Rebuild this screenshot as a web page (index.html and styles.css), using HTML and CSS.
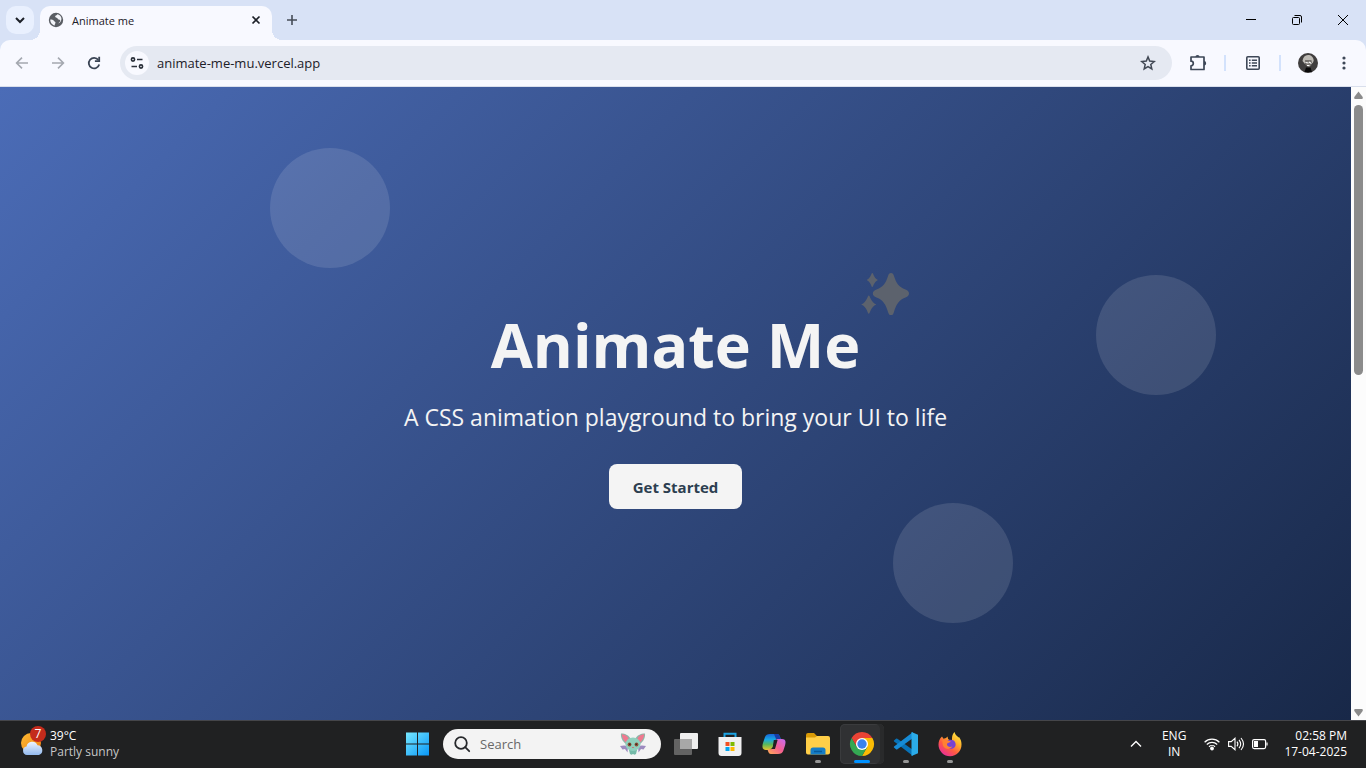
FILE: index.html
```html
<!DOCTYPE html>
<html lang="en">
<head>
<meta charset="utf-8">
<meta name="viewport" content="width=device-width, initial-scale=1">
<title>Animate me</title>
<link rel="stylesheet" href="styles.css">
</head>
<body class="screen">
<header class="browser">
  <div class="tabstrip">
    <button class="tab-search" aria-label="Search tabs"><svg width="28" height="28" viewBox="0 0 28 28" fill="none" stroke="#1c2028" stroke-width="2"><path d="M10 12l4 4 4-4"/></svg></button>
    <div class="tab">
      <svg width="16" height="16" viewBox="0 0 16 16"><circle cx="8" cy="8" r="7.2" fill="#5a5e64"/><path d="M2.3 7.6c1.600.1 2.700.2 3.500 1.200.6.9 1.700.8 1.700 1.900 0 1-.8 1-.8 2.800C4.200 13 2 10.600 2.300 7.600zM9.200 2.300c-.2 1.200-1.300.9-1.900 1.700-.5.8.3 1.600 1.300 1.700 1 .2.900 1.500 2.100 1.700 1.200.1 1.900.7 1.400 1.900-.3.9-1.300.9-1.600 2.300 4.300-2.400 4-8.400-1.300-9.300z" fill="#f3f5fa"/></svg>
      <span class="tab-title">Animate me</span>
      <button class="icon-button tab-close" aria-label="Close tab"><svg width="16" height="16" viewBox="0 0 16 16" stroke="#1c2028" stroke-width="1.700"><path d="M4.500 4.500l7 7M11.500 4.500l-7 7"/></svg></button>
    </div>
    <button class="icon-button new-tab" aria-label="New tab"><svg width="16" height="16" viewBox="0 0 16 16" stroke="#454c57" stroke-width="1.600"><path d="M8 3v10M3 8h10"/></svg></button>
    <div class="window-controls">
      <button class="window-button" aria-label="Minimize"><svg width="12" height="12" viewBox="0 0 12 12" stroke="#000"><path d="M1 5.500h10"/></svg></button>
      <button class="window-button" aria-label="Restore"><svg width="12" height="12" viewBox="0 0 12 12" fill="none" stroke="#000"><rect x="1.500" y="3.500" width="7" height="7" rx="1"/><path d="M3.500 1.500H9a1.500 1.500 0 0 1 1.500 1.500v5.500"/></svg></button>
      <button class="window-button" aria-label="Close"><svg width="12" height="12" viewBox="0 0 12 12" stroke="#000"><path d="M1 1l10 10M11 1L1 11"/></svg></button>
    </div>
  </div>
  <div class="toolbar">
    <div class="nav">
      <button class="icon-button" aria-label="Back"><svg width="16" height="16" viewBox="0 0 16 16" fill="none" stroke="#a4a8b0" stroke-width="1.600"><path d="M14 8H3M8 2.600L2.600 8 8 13.400"/></svg></button>
      <button class="icon-button" aria-label="Forward"><svg width="16" height="16" viewBox="0 0 16 16" fill="none" stroke="#a4a8b0" stroke-width="1.600"><path d="M2 8h11M8 2.600L13.400 8 8 13.400"/></svg></button>
      <button class="icon-button" aria-label="Reload"><svg width="16" height="16" viewBox="0 0 16 16" fill="none" stroke="#3a4454" stroke-width="1.800"><path d="M13.200 9.600A5.300 5.300 0 1 1 12.300 4.900"/><path d="M13.200 1.800v4.300H8.900"/></svg></button>
    </div>
    <div class="omnibox">
      <button class="site-info" aria-label="View site information"><svg width="16" height="16" viewBox="0 0 16 16" fill="none" stroke="#2a303a" stroke-width="1.600"><circle cx="4" cy="4.500" r="1.600"/><path d="M8 4.500h5.500M2.500 11.500H8"/><circle cx="12" cy="11.500" r="1.600"/></svg></button>
      <input class="address" type="text" aria-label="Address" value="animate-me-mu.vercel.app">
      <button class="icon-button" aria-label="Bookmark this tab"><svg width="16" height="16" viewBox="0 0 16 16" fill="none" stroke="#414854" stroke-width="1.500"><path d="M8 1.900l1.700 4.200 4.500.4-3.400 3 1 4.400L8 11.600l-3.800 2.300 1-4.400-3.400-3 4.500-.4z"/></svg></button>
    </div>
    <div class="actions">
      <button class="icon-button" aria-label="Extensions"><svg width="18" height="18" viewBox="0 0 18 18"><path d="M2 3h13v12.500H2v-3.700a2.300 2.300 0 0 0 0-4.600z" fill="none" stroke="#3d4757" stroke-width="1.700" stroke-linejoin="round"/><path d="M6.400 3a2.100 2.100 0 0 1 4.200 0zM15 7a2.200 2.200 0 0 1 0 4.400z" fill="#3d4757"/></svg></button>
      <span class="divider"></span>
      <button class="icon-button" aria-label="Reading list"><svg width="16" height="16" viewBox="0 0 16 16" fill="none" stroke="#3d4757" stroke-width="1.600"><rect x="1.800" y="1.800" width="12.400" height="12.400" rx="1"/><path d="M4 5.200h1.600M4 8h1.600M4 10.800h1.600M6.800 5.200H12M6.800 8H12M6.800 10.800H12" stroke-width="1.500"/></svg></button>
      <span class="divider"></span>
      <div class="profile">
        <button class="icon-button" aria-label="Profile"><svg width="20" height="20" viewBox="0 0 20 20"><circle cx="10" cy="10" r="10" fill="#403e3e"/><path d="M4.500 8C5 4 7 2 10 2s5.500 2 5.700 5.500l-1 3L13 8H8l-1 3z" fill="#bdbab4"/><path d="M7 7h6.500v5L11 14.500 7.500 12z" fill="#77736f"/><path d="M7.500 9.500l3 .5M11 9l2.500 1.500M9 12.500h2.500" stroke="#fff" stroke-width="1.200"/><path d="M6.500 19.300L8 14.500h4.500l1.500 4.700z" fill="#090909"/></svg></button>
        <button class="icon-button" aria-label="Menu"><svg width="16" height="16" viewBox="0 0 16 16" fill="#3d4757"><circle cx="8" cy="3" r="1.600"/><circle cx="8" cy="8" r="1.600"/><circle cx="8" cy="13" r="1.600"/></svg></button>
      </div>
    </div>
  </div>
</header>

<div class="viewport">
  <main class="hero">
    <span class="bubble bubble-one"></span>
    <span class="bubble bubble-two"></span>
    <span class="bubble bubble-three"></span>
    <h1 class="hero-title">Animate Me
      <svg class="sparkles" width="48" height="44" viewBox="0 0 48 44" fill="#5c626d"><path d="M30 1c1.700 0 2.300 1 2.800 2.500 2.600 8 4.800 11 11.700 14.100 2.400 1 3.500 2 3.500 4s-1.100 2.800-3.500 4C37.600 28.200 35.400 32.500 32.800 40.500c-.5 1.600-1.100 2.600-2.800 2.600s-2.300-1-2.800-2.600c-2.600-8-4.800-12.300-11.700-14.900-2.400-1-3.700-2.100-3.700-4s1.300-3.100 3.700-4C22.400 14.500 24.600 11.500 27.200 3.500 27.700 2 28.300 1 30 1z"/><path d="M11.300 1c1.200 0 1.200 4.800 5.600 7-4.400 2.200-4.400 7-5.600 7s-1.200-4.800-5.600-7c4.400-2.200 4.400-7 5.600-7zM7.800 23.500c1.300 0 1.600 6.500 7.600 9-6 2.500-6.300 9.300-7.600 9.300S6.200 35 .2 32.500c6-2.500 6.300-9 7.600-9z"/></svg>
    </h1>
    <p class="hero-text">A CSS animation playground to bring your UI to life</p>
    <button class="cta">Get Started</button>
  </main>
  <div class="scrollbar" aria-hidden="true">
    <svg width="15" height="16" viewBox="0 0 15 16"><path d="M7.500 4.500l4.200 5.500q.8 2-1 2H4.300q-1.800 0-1-2z" fill="#8b8b8b"/></svg>
    <div class="track"><div class="thumb"></div></div>
    <svg width="15" height="16" viewBox="0 0 15 16"><path d="M7.500 12.500l4.200-5.500q.8-2-1-2H4.300q-1.800 0-1 2z" fill="#8b8b8b"/></svg>
  </div>
</div>

<footer class="taskbar">
  <button class="weather">
    <svg width="28" height="30" viewBox="0 0 28 30"><defs><linearGradient id="sun" x1="0" y1="0" x2="1" y2="1"><stop stop-color="#ffbd33"/><stop offset="1" stop-color="#ec7d13"/></linearGradient><linearGradient id="cloud" x2="0" y2="1"><stop stop-color="#edf4ff"/><stop offset="1" stop-color="#92b9ee"/></linearGradient></defs><circle cx="11" cy="14" r="10" fill="url(#sun)"/><path d="M7 26a4.300 4.300 0 0 1-.5-8.500 5.800 5.800 0 0 1 11-1.200 5 5 0 0 1 1.500 9.700z" fill="url(#cloud)"/><circle cx="18" cy="5" r="8" fill="#c42b1c"/><text x="18" y="9" text-anchor="middle" class="badge">7</text></svg>
    <span class="weather-text"><span>39°C</span><span class="muted">Partly sunny</span></span>
  </button>
  <nav class="dock" aria-label="Applications">
    <button class="app" aria-label="Start"><svg width="24" height="24" viewBox="0 0 24 24"><defs><linearGradient id="win" gradientUnits="userSpaceOnUse" x1="0" y1="0" x2="24" y2="24"><stop stop-color="#78e9ff"/><stop offset="1" stop-color="#0594f7"/></linearGradient></defs><path d="M0 .5h11v11H0zM12 .5h11v11H12zM0 12.500h11v11H0zM12 12.500h11v11H12z" fill="url(#win)"/></svg></button>
    <label class="search">
      <svg width="18" height="18" viewBox="0 0 18 18" fill="none" stroke="#26282b" stroke-width="1.800"><circle cx="8" cy="8" r="5.800"/><path d="M12.200 12.200l4 4" stroke-linecap="round"/></svg>
      <input class="search-input" type="text" placeholder="Search" aria-label="Search">
      <svg width="26" height="22" viewBox="0 0 26 22"><path d="M8 13q-4-1-8 0l2.500 3.500L5 16l2.500 3.500zM18 13q4-1 8 0l-2.500 3.500L21 16l-2.500 3.500z" fill="#9c8abf"/><path d="M1 .5c4.500 0 8 2 9.500 5L6 11C2.500 8.500.5 4.500 1 .5zM25 .5c-4.500 0-8 2-9.500 5L20 11c3.500-2.500 5.500-6.500 5-10.500z" fill="#8fb5a8"/><path d="M1.800 1.300C5.500 1.800 8 3.500 8.700 6L6 9.500C3.500 7.500 2 4.500 1.800 1.300zM24.200 1.300c-3.700.5-6.200 2.200-6.900 4.700L20 9.500c2.500-2 4-5 4.200-8.200z" fill="#f0788f"/><path d="M9 17h8l-1 4-1.500.7L13 21l-1.500.7L10 21z" fill="#74baa8"/><ellipse cx="13" cy="11.300" rx="7.500" ry="6.800" fill="#8fd0bd"/><circle cx="9.500" cy="11.500" r="1.900" fill="#8c5138"/><circle cx="16.500" cy="11.500" r="1.900" fill="#8c5138"/><circle cx="9.800" cy="11.200" r=".7" fill="#25191b"/><circle cx="16.200" cy="11.200" r=".7" fill="#25191b"/><path d="M11.800 14h2.400q-1.200 2-2.400 0z" fill="#d0606c"/></svg>
    </label>
    <div class="apps">
      <button class="app" aria-label="Task view"><svg width="24" height="24" viewBox="0 0 24 24"><rect x="6" y="1" width="18" height="16" rx="1" fill="#efefef"/><rect y="7" width="18" height="16" rx="1" fill="#636363"/><path d="M6 7h12v10H6z" fill="#a8a8a8"/></svg></button>
      <button class="app" aria-label="Store"><svg width="24" height="24" viewBox="0 0 24 24"><path d="M6.500 6V1.700h11V6" fill="none" stroke="#1ba3e3" stroke-width="2"/><path d="M.5 5h23v16a3 3 0 0 1-3 3h-17a3 3 0 0 1-3-3z" fill="#f0f0f1"/><path d="M7.500 10h4v4h-4z" fill="#f25022"/><path d="M12.500 10h4v4h-4z" fill="#7fba00"/><path d="M7.500 15h4v4h-4z" fill="#00a4ef"/><path d="M12.500 15h4v4h-4z" fill="#ffb900"/></svg></button>
      <button class="app" aria-label="Copilot"><svg width="24" height="24" viewBox="0 0 24 24"><defs><linearGradient id="cop-a" x2="0" y2="1"><stop stop-color="#1866d9"/><stop offset=".35" stop-color="#18a9e4"/><stop offset=".65" stop-color="#59b85a"/><stop offset="1" stop-color="#e8c52c"/></linearGradient><linearGradient id="cop-b" x1="1" y1="0" x2="0" y2="1"><stop stop-color="#c56cf5"/><stop offset=".5" stop-color="#f55f91"/><stop offset="1" stop-color="#ffb052"/></linearGradient></defs><path d="M8 2h7c2 0 2.500 1.500 3 3l.7 2H16c-2 0-3 1-3.700 3l-1.500 5c-.5 2-1.500 3-3.800 3H4c-4 0-4-4-3-7l2-6c.8-2 2.300-3 5-3z" fill="url(#cop-a)"/><path d="M12 2h3c2 0 2.500 1.500 3 3l.7 2H14z" fill="#183da8"/><path d="M16 22H9c-2 0-2.500-1.500-3-3l-.5-1.500H8c2 0 3-1 3.700-3l1.500-5C13.800 7.500 15 7 17 7h3c4 0 4 3 3 6.500L21.200 19c-.8 2-2.300 3-5.200 3z" fill="url(#cop-b)"/><path d="M11.800 8h3.800L13 17H8.500q1.800-.5 2.300-2z" fill="#202122"/></svg></button>
      <button class="app running" aria-label="File Explorer"><svg width="24" height="24" viewBox="0 0 24 24"><path d="M0 3q0-2 2-2h6l3 3h11v5H0z" fill="#d99a06"/><path d="M0 5.500h9L11 4h11q2 0 2 2v14.500q0 2-2 2H2q-2 0-2-2z" fill="#ffcf48"/><path d="M4.500 22.500V18q0-2.500 2.500-2.500h10q2.500 0 2.500 2.500v4.500z" fill="#167dc5"/><path d="M8 19.500h8" stroke="#075a9b" stroke-width="1.500"/></svg></button>
      <button class="app active" aria-label="Chrome"><svg width="24" height="24" viewBox="0 0 24 24"><path d="M1.600 6A12 12 0 0 1 22.400 6H12L6.800 15z" fill="#ea4335"/><path d="M22.400 6A12 12 0 0 1 12 24l5.200-9L12 6z" fill="#fbbc05"/><path d="M1.600 6A12 12 0 0 0 12 24l5.200-9H6.800z" fill="#34a853"/><circle cx="12" cy="12" r="6" fill="#fff"/><circle cx="12" cy="12" r="4.700" fill="#3b82ee"/></svg></button>
      <button class="app running" aria-label="Visual Studio Code"><svg width="24" height="24" viewBox="0 0 24 24"><path d="M0 8.400l2-1.700q.7-.5 1.400 0L19 18v6L.1 9.600q-.6-.6-.1-1.200z" fill="#0872b7"/><path d="M0 15.600l2 1.700q.7.500 1.400 0L19 6V0L.1 14.400q-.6.600-.1 1.200z" fill="#168bd5"/><path d="M17.500 0L24 2.700v18.600L17.500 24z" fill="#2bace9"/></svg></button>
      <button class="app running" aria-label="Firefox"><svg width="24" height="24" viewBox="0 0 24 24"><defs><linearGradient id="fox" x1=".9" y1="0" x2=".2" y2="1"><stop stop-color="#fff04c"/><stop offset=".35" stop-color="#ffb12a"/><stop offset=".65" stop-color="#ff5a42"/><stop offset="1" stop-color="#e629a3"/></linearGradient></defs><path d="M4 4.500l1.500 2.300L8 6l1.500-1.500q0 2.500 2 3.500l2.500 1c0-4 0-6.500 2.500-9 .5 2.500 2.500 4 4 5.500l.5-.5c2 2.500 2.500 5 2.500 7.500A11.500 11.500 0 0 1 .5 12.800C.5 10 1.500 6.500 4 4.500z" fill="url(#fox)"/><path d="M8.500 9.500c2-2.500 7-2.500 8.500.5 2 4-1 7-4.500 7S6.500 13 8.500 9.500z" fill="#7743d2"/><path d="M4.500 8c2-1 4-.5 5.500.7l2.800.6c-.5 1.500-3.800 1.200-3.800 3.200 0 2.300 3.500 3 5.500 1.800-1.500 3.200-7 3.700-9 .2C4.300 12.500 4.500 10 4.500 8z" fill="#ff8133"/></svg></button>
    </div>
  </nav>
  <div class="tray">
    <button class="tray-button" aria-label="Show hidden icons"><svg width="14" height="14" viewBox="0 0 14 14" fill="none" stroke="#fff" stroke-width="1.400"><path d="M2 9.500l5-5 5 5"/></svg></button>
    <button class="tray-button language">ENG<br>IN</button>
    <button class="tray-button status" aria-label="Network, volume and battery">
      <svg width="16" height="16" viewBox="0 0 16 16" fill="none" stroke="#fff" stroke-width="1.200"><path d="M.6 6.200a10.500 10.500 0 0 1 14.800 0M2.800 8.500a7.400 7.400 0 0 1 10.400 0M5 10.700a4.300 4.300 0 0 1 6 0"/><circle cx="8" cy="12.500" r="1.300" fill="#fff"/></svg>
      <svg width="16" height="16" viewBox="0 0 16 16" fill="none" stroke="#fff" stroke-width="1.100"><path d="M.6 5.600h2.600L7 2.300v11.400l-3.800-3.300H.6zM9 5.700q1.800 2.300 0 4.600M11 3.800q3.400 4.200 0 8.400M13 2q5 6 0 12"/></svg>
      <svg width="16" height="16" viewBox="0 0 16 16" fill="none" stroke="#fff" stroke-width="1.200"><rect x=".6" y="3.600" width="13" height="9" rx="1.500"/><path d="M2 5h4v6H2z" fill="#fff" stroke="none"/><path d="M15 6.500v3"/></svg>
    </button>
    <button class="tray-button clock">02:58 PM<br>17-04-2025</button>
  </div>
</footer>
</body>
</html>
```

FILE: styles.css
```css
* {
  box-sizing: border-box;
}

body {
  margin: 0;
}

button,
input {
  border: 0;
  padding: 0;
  margin: 0;
  background: transparent;
  color: inherit;
  font: inherit;
}

svg {
  display: block;
  flex: none;
  overflow: visible;
}

.screen {
  display: flex;
  flex-direction: column;
  height: 100vh;
  overflow: hidden;
  font-family: "Open Sans", "Noto Sans", sans-serif;
  font-size: 12px;
  color: #1c2028;
}

.browser {
  background: #d8e2f6;
}

.tabstrip {
  display: flex;
  align-items: center;
  height: 40px;
  padding-left: 6px;
}

.tab-search {
  border-radius: 10px;
  background: #e9f0fe;
}

.tab {
  position: relative;
  display: flex;
  align-self: flex-end;
  align-items: center;
  gap: 8px;
  width: 232px;
  height: 34px;
  margin-left: 6px;
  padding: 0 2px 6px 8px;
  border-radius: 10px 10px 0 0;
  background: #f8f9ff;
}

.tab::before,
.tab::after {
  content: "";
  position: absolute;
  bottom: 0;
  width: 10px;
  height: 10px;
}

.tab::before {
  right: 100%;
  background: radial-gradient(circle at 0 0, transparent 10px, #f8f9ff 10px);
}

.tab::after {
  left: 100%;
  background: radial-gradient(circle at 100% 0, transparent 10px, #f8f9ff 10px);
}

.tab-title {
  flex: 1;
  font-size: 11px;
}

.icon-button {
  display: flex;
  align-items: center;
  justify-content: center;
  width: 28px;
  height: 28px;
}

.new-tab {
  margin-left: 6px;
}

.window-controls {
  display: flex;
  margin-left: auto;
}

.window-button {
  display: flex;
  align-items: center;
  justify-content: center;
  width: 46px;
  height: 40px;
}

.toolbar {
  display: flex;
  align-items: center;
  gap: 12px;
  height: 47px;
  padding: 0 8px;
  border-bottom: 1px solid #d9dfec;
  border-radius: 10px 10px 0 0;
  background: #f8f9ff;
}

.nav,
.profile {
  display: flex;
  gap: 8px;
}

.omnibox {
  display: flex;
  flex: 1;
  align-items: center;
  height: 34px;
  padding: 0 10px 0 5px;
  border-radius: 17px;
  background: #e5e9f2;
}

.site-info {
  display: flex;
  align-items: center;
  justify-content: center;
  width: 24px;
  height: 24px;
  border-radius: 50%;
  background: #f8f9ff;
}

.address {
  flex: 1;
  margin-left: 8px;
  font-size: 13px;
}

.actions {
  display: flex;
  align-items: center;
  gap: 12px;
}

.divider {
  width: 2px;
  height: 16px;
  margin-right: 1px;
  background: #d3e2fc;
}

.viewport {
  display: flex;
  flex: 1;
  min-height: 0;
}

.hero {
  position: relative;
  display: flex;
  flex: 1;
  flex-direction: column;
  align-items: center;
  justify-content: center;
  padding-top: 7px;
  background: linear-gradient(135deg, #4b6cb7, #182848);
  color: #f4f4f4;
}

.bubble {
  position: absolute;
  width: 120px;
  height: 120px;
  border-radius: 50%;
  background: rgba(244, 244, 244, 0.12);
}

.bubble-one {
  top: 61px;
  left: 20%;
}

.bubble-two {
  top: 188px;
  right: 10%;
}

.bubble-three {
  right: 25%;
  bottom: 97px;
}

.hero-title {
  position: relative;
  margin: 0;
  font-size: 61px;
  font-weight: 700;
  line-height: 80px;
}

.sparkles {
  position: absolute;
  top: -33px;
  left: 100%;
  margin-left: 1px;
}

.hero-text {
  margin: 16px 0 31px;
  font-size: 23px;
  line-height: 32px;
}

.cta {
  height: 45px;
  padding: 0 24px;
  border-radius: 8px;
  background: #f4f4f4;
  color: #2c3e50;
  font-size: 15px;
  font-weight: 700;
}

.scrollbar {
  display: flex;
  flex-direction: column;
  width: 15px;
  background: #fcfcfc;
}

.track {
  flex: 1;
  padding: 2px 2px 0 3px;
}

.thumb {
  width: 9px;
  height: 45%;
  border-radius: 5px;
  background: #8b8b8b;
}

.taskbar {
  display: grid;
  grid-template-columns: 1fr auto 1fr;
  align-items: center;
  height: 48px;
  padding-bottom: 1px;
  border-top: 1px solid #45464a;
  background: #202122;
  color: #fff;
}

.weather {
  display: flex;
  align-items: center;
  gap: 2px;
  padding-left: 20px;
  text-align: left;
}

.weather-text {
  display: flex;
  flex-direction: column;
  line-height: 16px;
}

.badge {
  fill: #fff;
  font-size: 12px;
}

.muted {
  color: #c7c7c7;
}

.dock,
.apps {
  display: flex;
  align-items: center;
}

.dock {
  gap: 3px;
  padding-left: 2px;
}

.app {
  position: relative;
  display: flex;
  align-items: center;
  justify-content: center;
  width: 44px;
  height: 40px;
}

.running::after,
.active::after {
  content: "";
  position: absolute;
  bottom: 1px;
  left: 19px;
  width: 6px;
  height: 3px;
  border-radius: 2px;
  background: #969696;
}

.active {
  border-radius: 5px;
  background: #303133;
  box-shadow: inset -4px 0 #292a2b, inset 0 0 0 1px #3a3b3d;
}

.active::after {
  left: 14px;
  width: 16px;
  background: #0091ff;
}

.search {
  display: flex;
  align-items: center;
  gap: 9px;
  width: 218px;
  height: 30px;
  padding: 0 15px 0 10px;
  border-radius: 15px;
  background: #f3f3f3;
}

.search-input {
  flex: 1;
  min-width: 0;
  color: #202122;
  font-size: 13px;
}

.search-input::placeholder {
  color: #686868;
  opacity: 1;
}

.tray {
  display: flex;
  align-items: center;
  justify-content: flex-end;
  padding-right: 19px;
}

.tray-button {
  line-height: 16px;
}

.language {
  margin: 0 18px 0 19px;
}

.status {
  display: flex;
  gap: 8px;
}

.clock {
  margin-left: 16px;
  text-align: right;
}
```
